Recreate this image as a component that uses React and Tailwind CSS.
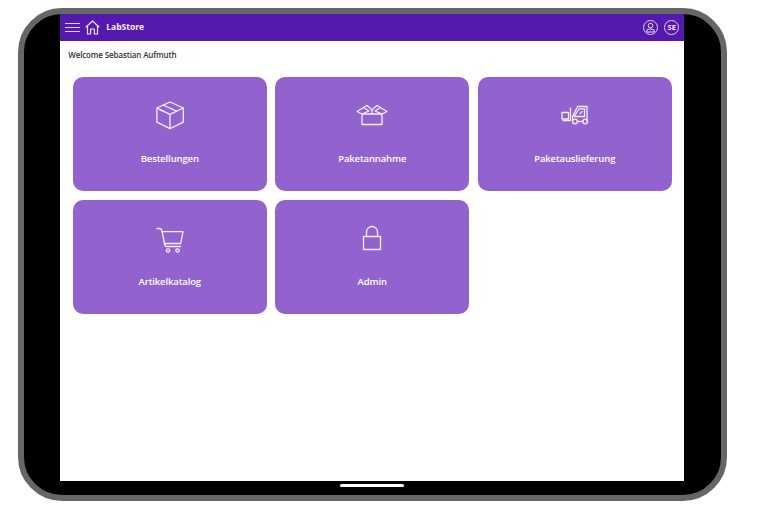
const font = { fontFamily: '"Open Sans", sans-serif' };

function Box() {
  return (
    <svg width="30" height="30" viewBox="0 0 30 30" fill="none" stroke="currentColor" strokeWidth="1.3" strokeLinejoin="round" strokeLinecap="round">
      <path d="M15 2 L28.3 8 V22.2 L15 28.6 L1.9 22.2 V8 Z" />
      <path d="M1.9 8 L15 14.4 L28.3 8 M15 14.4 V28.6" />
      <path d="M8.2 5 L21.5 11.2 M5 9.8 L9.5 11.8" />
    </svg>
  );
}
function OpenBox() {
  return (
    <svg width="32" height="22" viewBox="0 0 32 22" fill="none" stroke="currentColor" strokeWidth="1.3" strokeLinejoin="round" strokeLinecap="round">
      <path d="M6 10 V20.5 H26 V10" />
      <path d="M6 10 L1 7.5 L7.5 3.5 L13 7 L6 10 H26 L19 7 L24.5 3.5 L31 7.5 L26 10" />
      <path d="M7.5 3.5 L11 1.5 L14 4 L16 6 L18 4 L21 1.5 L24.5 3.5" />
      <path d="M16 6 V10" />
    </svg>
  );
}
function Forklift() {
  return (
    <svg width="28" height="20" viewBox="0 0 28 20" fill="none" stroke="currentColor" strokeWidth="1.3" strokeLinejoin="round" strokeLinecap="round">
      <path d="M1 7.5 H7.5 V14 H1 Z" />
      <path d="M9.5 3 V15.5 H2" />
      <circle cx="14" cy="16.5" r="2.3" />
      <circle cx="24.2" cy="16.5" r="2.3" />
      <path d="M11.5 16 V11.5 L16.5 1.5 H26 V16 M16.5 16.5 H21.8" />
      <path d="M13 11.5 H23.5 V3.8 H18 Z" />
      <path d="M19 8.5 L21 6.5" />
    </svg>
  );
}
function Cart() {
  return (
    <svg className="mt-[3px]" width="28" height="26" viewBox="0 0 28 26" fill="none" stroke="currentColor" strokeWidth="1.3" strokeLinejoin="round" strokeLinecap="round">
      <path d="M1 1.5 H3.5 Q5.5 1.5 6 4 L8.8 18 Q9.1 19.5 11 19.5 H24.5" />
      <path d="M6 4.7 H27 L24.7 16.5 H8.2" />
      <circle cx="12" cy="23.5" r="1.7" />
      <circle cx="21.5" cy="23.5" r="1.7" />
    </svg>
  );
}
function Lock() {
  return (
    <svg width="20" height="26" viewBox="0 0 20 26" fill="none" stroke="currentColor" strokeWidth="1.3" strokeLinejoin="round">
      <path d="M1.5 11.5 H18.5 V24.5 H1.5 Z" />
      <path d="M4.5 11.5 V7 A5.5 5.5 0 0 1 15.5 7 V11.5" />
    </svg>
  );
}

function Card({ icon, label }) {
  return (
    <div className="h-[114px] rounded-[10px] bg-[#9263cf] text-[#f4eefb] flex flex-col items-center">
      <div className="h-[30px] mt-[23px] flex items-center justify-center">{icon}</div>
      <div className="mt-[21.5px] text-[9.5px] tracking-[-0.13px] leading-[14px] font-semibold text-white">{label}</div>
    </div>
  );
}

export default function App() {
  return (
    <div className="w-[768px] h-[519px] bg-white pt-[8px] pl-[18px]" style={font}>
      <div className="w-[709px] h-[493px] border-[6px] border-[#666666] rounded-[44px] bg-black pl-[36.25px]">
        <div className="w-[623.5px] h-[467px] bg-white flex flex-col">
          <header className="h-[27px] bg-[#5619ad] flex items-center text-[#ece3f7] shrink-0">
            <div className="ml-[5px] w-[15px] flex flex-col gap-[2.5px]">
              <span className="h-[1.5px] bg-[#ddd0ef]" />
              <span className="h-[1.5px] bg-[#ddd0ef]" />
              <span className="h-[1.5px] bg-[#ddd0ef]" />
            </div>
            <svg className="ml-[4.5px]" width="15" height="15" viewBox="0 0 15 15" fill="none" stroke="currentColor" strokeWidth="1.2" strokeLinejoin="round">
              <path d="M0.7 7.3 L7.5 1 L14.3 7.3 M2.5 6 V14 H5.6 V9 H9.4 V14 H12.5 V6" />
            </svg>
            <span className="ml-[6.5px] text-[8.5px] font-bold leading-none text-[#f4eefb]">LabStore</span>
            <div className="ml-auto mr-[4.5px] flex items-center gap-[6px]">
              <span className="w-[15px] h-[15px] rounded-full border border-[#ddd0ef] flex items-center justify-center">
                <svg width="11" height="11" viewBox="0 0 11 11" fill="none" stroke="currentColor" strokeWidth="1">
                  <circle cx="5.5" cy="3.6" r="2.3" />
                  <path d="M1.8 10 V8.8 Q1.8 7.2 3.6 7.2 H7.4 Q9.2 7.2 9.2 8.8 V10 Z" />
                </svg>
              </span>
              <span className="w-[15px] h-[15px] rounded-full border border-[#ddd0ef] flex items-center justify-center text-[7.5px] font-bold text-[#f4eefb] leading-none">SE</span>
            </div>
          </header>
          <div className="pt-[8px] pl-[8px] text-[8px] tracking-[-0.13px] leading-[11px] font-semibold text-[#333333]">Welcome Sebastian Aufmuth</div>
          <div className="mt-[17px] ml-[12.5px] w-[599px] grid grid-cols-3 gap-x-[8.5px] gap-y-[9px]">
            <Card icon={<Box />} label="Bestellungen" />
            <Card icon={<OpenBox />} label="Paketannahme" />
            <Card icon={<Forklift />} label="Paketauslieferung" />
            <Card icon={<Cart />} label="Artikelkatalog" />
            <Card icon={<Lock />} label="Admin" />
          </div>
        </div>
        <div className="w-[64px] h-[3px] bg-white rounded-full ml-[280px] mt-[3px]" />
      </div>
    </div>
  );
}
